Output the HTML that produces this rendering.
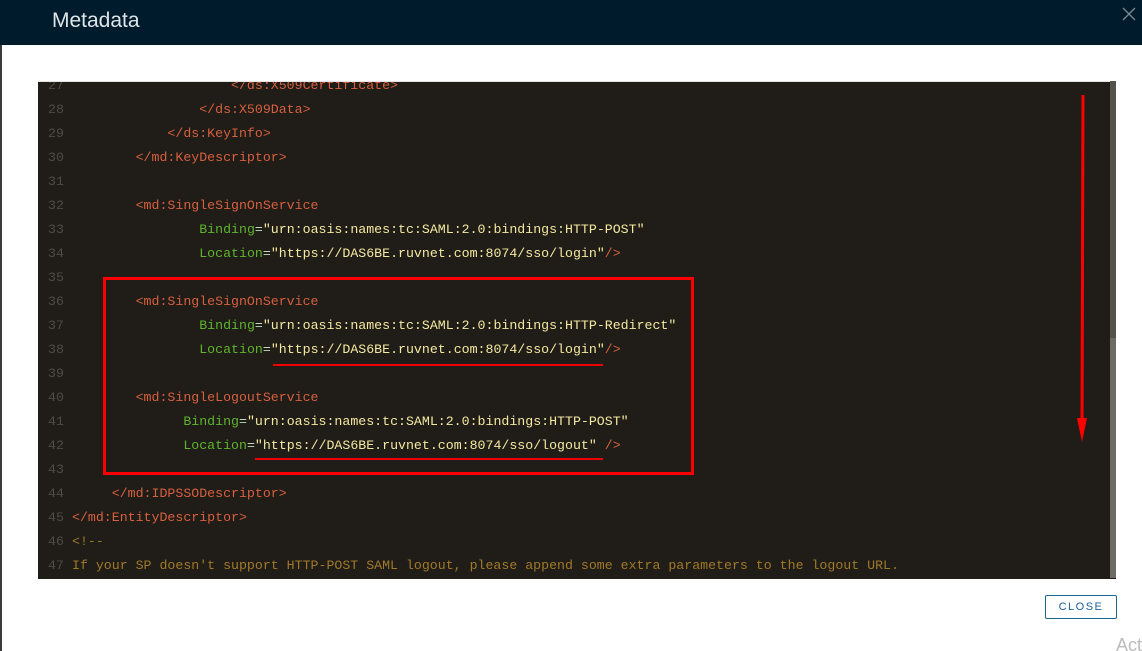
<!DOCTYPE html>
<html><head><meta charset="utf-8"><style>
html,body{margin:0;padding:0;width:1142px;height:651px;overflow:hidden;background:#fff;font-family:"Liberation Sans",sans-serif;position:relative}
.hdr{position:absolute;left:0;top:0;width:1142px;height:45px;background:#001b2c}
.hdr h1{position:absolute;left:52px;top:9px;margin:0;font-weight:normal;font-size:21px;color:#dfe5e8}
.x{position:absolute;left:1122px;top:7px}
.lstrip{position:absolute;left:0;top:45px;width:2px;height:606px;background:#3a3a3a}
.code{position:absolute;left:38px;top:81px;width:1078px;height:497px;background:#201c17;overflow:hidden;border-top:1px solid #e4e4e4}
.ln{position:absolute;left:0;height:24px;line-height:24px;font-family:"Liberation Mono",monospace;font-size:13.25px;white-space:pre;color:#d6603f}
.n{position:absolute;left:10px;color:#4e4b47}
.t{position:absolute;left:34px}
.g{color:#5db52c}.y{color:#f3e9a0}.w{color:#bdb}.c{color:#a07a28}
.sb{position:absolute;left:1110px;top:81px;width:6px;height:497px;background:#6e6b66}
.sbt{position:absolute;left:1110px;top:81px;width:6px;height:257px;background:#55524d}
.box{position:absolute;left:103px;top:277px;width:585px;height:192px;border:3px solid #f00}
.ul{position:absolute;height:2px;background:#e00}
.btn{position:absolute;left:1045px;top:595px;width:70px;height:22px;border:1px solid #1a6496;border-radius:2px;color:#1a5f96;font-size:11px;letter-spacing:1.5px;text-align:center;line-height:22px}
.act{position:absolute;left:1116px;top:635px;color:#bbb;font-size:18px}
</style></head><body>
<div class="hdr"><h1>Metadata</h1>
<svg class="x" width="14" height="14" viewBox="0 0 14 14"><path d="M1 1L13 13M13 1L1 13" stroke="#7a8a94" stroke-width="1.3"/></svg></div>
<div class="lstrip"></div>
<div class="code">
<div class="ln" style="top:-8px"><span class="n">27</span><span class="t">                    &lt;/ds:X509Certificate&gt;</span></div>
<div class="ln" style="top:16px"><span class="n">28</span><span class="t">                &lt;/ds:X509Data&gt;</span></div>
<div class="ln" style="top:40px"><span class="n">29</span><span class="t">            &lt;/ds:KeyInfo&gt;</span></div>
<div class="ln" style="top:64px"><span class="n">30</span><span class="t">        &lt;/md:KeyDescriptor&gt;</span></div>
<div class="ln" style="top:88px"><span class="n">31</span></div>
<div class="ln" style="top:112px"><span class="n">32</span><span class="t">        &lt;md:SingleSignOnService</span></div>
<div class="ln" style="top:136px"><span class="n">33</span><span class="t">                <span class="g">Binding</span><span class="w">=</span><span class="y">"urn:oasis:names:tc:SAML:2.0:bindings:HTTP-POST"</span></span></div>
<div class="ln" style="top:160px"><span class="n">34</span><span class="t">                <span class="g">Location</span><span class="w">=</span><span class="y">"https://DAS6BE.ruvnet.com:8074/sso/login"</span>/&gt;</span></div>
<div class="ln" style="top:184px"><span class="n">35</span></div>
<div class="ln" style="top:208px"><span class="n">36</span><span class="t">        &lt;md:SingleSignOnService</span></div>
<div class="ln" style="top:232px"><span class="n">37</span><span class="t">                <span class="g">Binding</span><span class="w">=</span><span class="y">"urn:oasis:names:tc:SAML:2.0:bindings:HTTP-Redirect"</span></span></div>
<div class="ln" style="top:256px"><span class="n">38</span><span class="t">                <span class="g">Location</span><span class="w">=</span><span class="y">"https://DAS6BE.ruvnet.com:8074/sso/login"</span>/&gt;</span></div>
<div class="ln" style="top:280px"><span class="n">39</span></div>
<div class="ln" style="top:304px"><span class="n">40</span><span class="t">        &lt;md:SingleLogoutService</span></div>
<div class="ln" style="top:328px"><span class="n">41</span><span class="t">              <span class="g">Binding</span><span class="w">=</span><span class="y">"urn:oasis:names:tc:SAML:2.0:bindings:HTTP-POST"</span></span></div>
<div class="ln" style="top:352px"><span class="n">42</span><span class="t">              <span class="g">Location</span><span class="w">=</span><span class="y">"https://DAS6BE.ruvnet.com:8074/sso/logout"</span> /&gt;</span></div>
<div class="ln" style="top:376px"><span class="n">43</span></div>
<div class="ln" style="top:400px"><span class="n">44</span><span class="t">     &lt;/md:IDPSSODescriptor&gt;</span></div>
<div class="ln" style="top:424px"><span class="n">45</span><span class="t">&lt;/md:EntityDescriptor&gt;</span></div>
<div class="ln c" style="top:448px"><span class="n">46</span><span class="t">&lt;!--</span></div>
<div class="ln c" style="top:472px"><span class="n">47</span><span class="t">If your SP doesn't support HTTP-POST SAML logout, please append some extra parameters to the logout URL.</span></div>
</div>
<div class="sb"></div><div class="sbt"></div>
<div class="box"></div>
<div class="ul" style="left:273px;top:364px;width:330px"></div>
<div class="ul" style="left:255px;top:458px;width:348px"></div>
<svg style="position:absolute;left:1070px;top:90px" width="24" height="360"><path d="M13 5L12 335" stroke="#f00" stroke-width="3"/><path d="M7 328L17 328L12 352Z" fill="#f00"/></svg>
<div class="btn">CLOSE</div>
<div class="act">Act</div>
</body></html>
